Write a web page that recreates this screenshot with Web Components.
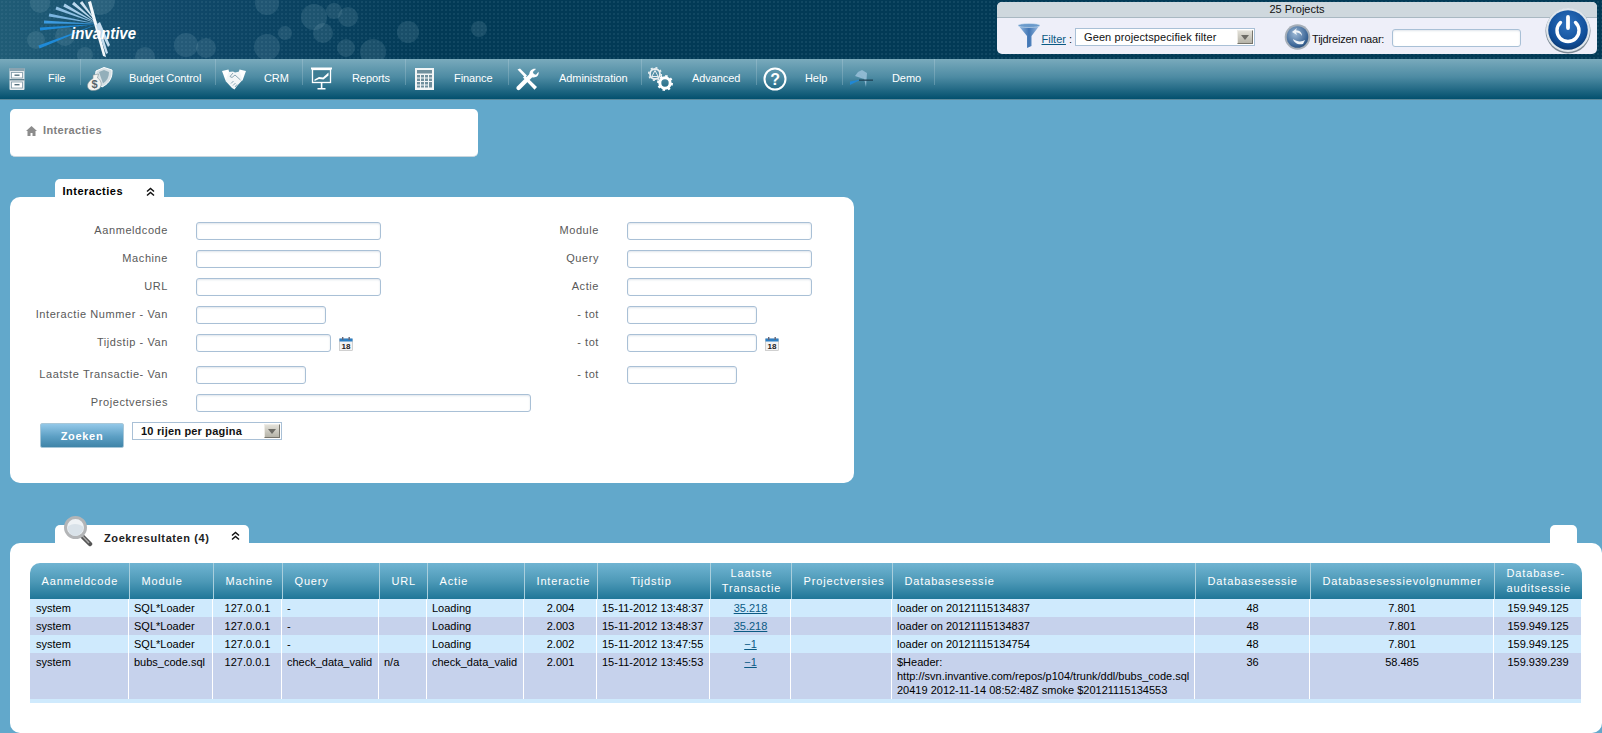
<!DOCTYPE html>
<html lang="nl">
<head>
<meta charset="utf-8">
<title>Interacties</title>
<style>
  html, body { margin: 0; padding: 0; height: 733px; overflow: hidden; }
  body { background: #62a8cb; font: 11px "Liberation Sans", Arial, sans-serif; color: #000; }
</style>
</head>
<body>
<inv-header></inv-header>
<inv-nav>
  <inv-nav-item icon="file" w="81" box="48" pad="8">File</inv-nav-item>
  <inv-nav-item icon="budget" w="135" box="48">Budget Control</inv-nav-item>
  <inv-nav-item icon="crm" w="87" box="48">CRM</inv-nav-item>
  <inv-nav-item icon="reports" w="103" box="49" pad="8">Reports</inv-nav-item>
  <inv-nav-item icon="finance" w="103" box="48" pad="8">Finance</inv-nav-item>
  <inv-nav-item icon="admin" w="133" pad="6">Administration</inv-nav-item>
  <inv-nav-item icon="advanced" w="115">Advanced</inv-nav-item>
  <inv-nav-item icon="help" w="86" box="48" pad="6">Help</inv-nav-item>
  <inv-nav-item icon="demo" w="92" box="49">Demo</inv-nav-item>
</inv-nav>
<inv-main>
  <inv-breadcrumb>Interacties</inv-breadcrumb>
  <inv-panel title="Interacties" width="844" height="286" tab="109" toggle="91" gap="22">
    <inv-search-form></inv-search-form>
  </inv-panel>
  <inv-panel title="Zoekresultaten (4)" width="1592" height="190" tab="194" toggle="176" gap="42" search>
    <inv-results></inv-results>
  </inv-panel>
</inv-main>

<script>
// icons drawn for this page
const ICONS = {
  file: `<svg width="24" height="24" viewBox="0 0 24 24"><rect x="1.500" y="1" width="15" height="22" rx="1" fill="#e4e9ec"/><rect x="1.500" y="1" width="15" height="3" fill="#8aa3b0"/><rect x="1.500" y="12" width="15" height="1.400" fill="#5f7f8e"/><rect x="3.500" y="5.500" width="11" height="5.500" fill="#fff" stroke="#7d98a6" stroke-width=".8"/><rect x="3.500" y="15" width="11" height="6" fill="#fff" stroke="#7d98a6" stroke-width=".8"/><rect x="6.500" y="7.500" width="5" height="1.400" fill="#55707e"/><rect x="6.500" y="17" width="5" height="1.400" fill="#55707e"/></svg>`,
  budget: `<svg width="26" height="24" viewBox="0 0 26 24"><path d="M9 4 L17 0.500 L25 3 C25.500 10 23 16 15 20 L8 14Z" fill="#d7e1e5" stroke="#fff"/><path d="M12 5 L17 3 L22 5 C22 10 20 14 16 16.500Z" fill="#93afba"/><path d="M6 8 L11.500 7 L10.500 11 C14 13 15 17 13.500 20 C12 24 3 25 1 21 C-1 17 3 13 6 11.500Z" fill="#f2f3f0" stroke="#7c8e96" stroke-width=".6"/><text x="4.500" y="21" font-family="Liberation Sans, sans-serif" font-size="11" font-weight="700" fill="#56646a">$</text></svg>`,
  crm: `<svg width="24" height="24" viewBox="0 0 24 24"><path d="M0 4 L6.500 2.500 L8.500 10 L3.500 13.500Z" fill="#fff"/><path d="M24 4 L17.500 2.500 L15.500 10 L20.500 13.500Z" fill="#fff"/><path d="M6.500 5 L11 4.500 L13 5.500 L17.500 4.500 L20.500 13 L15 19 L12.500 22.500 L10 21 L3.500 14Z" fill="#f2f6f7"/><path d="M11 6 L8 9.500 L10 10.500 L13 8 L18.500 13 M9 16.500 L11.500 14 M11 18.500 L13.500 16 M13 20 L15 17.500" fill="none" stroke="#7d9cab" stroke-width=".9"/></svg>`,
  reports: `<svg width="22" height="24" viewBox="0 0 22 24"><rect x="0" y="0.500" width="21" height="2" fill="#fff"/><rect x="1.500" y="2.500" width="18" height="13" fill="#3f7d94" stroke="#fff" stroke-width="1.300"/><path d="M3.500 12.500 L8 10 L12 10.500 L17.500 5.500 L17.500 8.500 L12.500 12.500 L8 12 L3.500 14Z" fill="#fff"/><rect x="9.800" y="15.500" width="1.600" height="6" fill="#fff"/><rect x="6.500" y="21" width="8" height="1.500" fill="#fff"/></svg>`,
  finance: `<svg width="22" height="24" viewBox="0 0 22 24"><rect x="1" y="1" width="19" height="22" fill="#f2f5f6"/><rect x="3" y="3" width="15" height="3.500" fill="#6f8f9d"/><g fill="#6f8f9d"><rect x="3" y="8" width="3" height="2.500"/><rect x="7" y="8" width="3" height="2.500"/><rect x="11" y="8" width="3" height="2.500"/><rect x="15" y="8" width="3" height="2.500"/><rect x="3" y="11.500" width="3" height="2.500"/><rect x="7" y="11.500" width="3" height="2.500"/><rect x="11" y="11.500" width="3" height="2.500"/><rect x="15" y="11.500" width="3" height="2.500"/><rect x="3" y="15" width="3" height="2.500"/><rect x="7" y="15" width="3" height="2.500"/><rect x="11" y="15" width="3" height="2.500"/><rect x="15" y="15" width="3" height="5.500"/><rect x="3" y="18.500" width="3" height="2"/><rect x="7" y="18.500" width="3" height="2"/><rect x="11" y="18.500" width="3" height="2"/></g></svg>`,
  admin: `<svg width="24" height="24" viewBox="0 0 24 24"><path d="M2.500 2.500 L5 1.500 L12 8.500 L10 10.500Z" fill="#fff"/><path d="M10 8.500 L22 20 L19.500 22.800 L8 10.500Z" fill="#fff"/><path d="M3.500 21 L16 8.500" stroke="#fff" stroke-width="4.200" stroke-linecap="round"/><path d="M15 9.500 C13 5.500 16.500 1 21 2 L17.800 5 L18.800 7 L21 7.800 L23.500 4.800 C24.500 9 20 12 15 9.500Z" fill="#fff"/></svg>`,
  advanced: `<svg width="25" height="24" viewBox="0 0 25 24"><g fill="none" stroke="#e9eff1"><circle cx="7" cy="7" r="5" stroke-width="1.800"/><circle cx="7" cy="7" r="6.300" stroke-width="1.600" stroke-dasharray="2 2.900"/><path d="M7 3.500 L3.800 9.500 H10.200Z" stroke-width="1"/></g><circle cx="17" cy="16" r="5.200" fill="none" stroke="#fff" stroke-width="3"/><circle cx="17" cy="16" r="7" fill="none" stroke="#fff" stroke-width="2" stroke-dasharray="2.400 3.100"/></svg>`,
  help: `<svg width="24" height="24" viewBox="0 0 24 24"><circle cx="12" cy="12" r="10.500" fill="none" stroke="#fff" stroke-width="2"/><text x="12" y="17.500" text-anchor="middle" font-family="Liberation Sans, sans-serif" font-size="16" font-weight="700" fill="#fff">?</text></svg>`,
  demo: `<svg width="24" height="24" viewBox="0 0 24 24"><path d="M6 9 L15 12 L9 5Z M9 5 L16 13 L13 3Z M13 3 L17 20 L18 6Z" fill="#8fb9d2"/><path d="M1 18 L12 12.500 L1 14.500Z" fill="#1f87d6"/><rect x="10" y="12.500" width="14" height="1.300" fill="#1d4256"/></svg>`,
  funnel: `<svg width="24" height="26" viewBox="0 0 24 26"><defs><linearGradient id="fg" x1="0" x2="1"><stop offset="0" stop-color="#9cc0e4"/><stop offset=".5" stop-color="#3f74b4"/><stop offset="1" stop-color="#a8c6e6"/></linearGradient></defs><path d="M1 2 L23 2 L14.500 13 L14.500 23 L10 25 L10 13Z" fill="url(#fg)"/><ellipse cx="12" cy="2.500" rx="11" ry="2" fill="#6a9acb" stroke="#d3e2f1" stroke-width=".6"/></svg>`,
  globe: `<svg width="27" height="28" viewBox="0 0 27 28"><defs><radialGradient id="gg" cx=".4" cy=".35" r=".8"><stop offset="0" stop-color="#9db9d6"/><stop offset=".7" stop-color="#3b6596"/><stop offset="1" stop-color="#1f3f68"/></radialGradient></defs><circle cx="13.500" cy="14" r="12.800" fill="#a5aeb8"/><circle cx="13.500" cy="14" r="10.800" fill="url(#gg)"/><path d="M13 5 L8 9 L13 12 L12 9.500 C15 9.500 17 11 18 13 C18 10 16 7.500 12 7.300Z M9 16 C10 20 14 22 19 21 L21 17 C18 19 13 19 9 16Z" fill="#eef3f8"/></svg>`,
  power: `<svg width="46" height="47" viewBox="0 0 46 47"><defs><radialGradient id="pg" cx=".5" cy=".35" r=".7"><stop offset="0" stop-color="#2f73c0"/><stop offset=".7" stop-color="#114f9a"/><stop offset="1" stop-color="#0a3468"/></radialGradient></defs><circle cx="23" cy="24" r="22.500" fill="#7d8a95"/><circle cx="23" cy="23" r="22" fill="#dfe6ec"/><circle cx="23" cy="23" r="19.800" fill="url(#pg)"/><path d="M15.500 15.500 A11 11 0 1 0 30.500 15.500" fill="none" stroke="#fff" stroke-width="3.400" stroke-linecap="round"/><path d="M23 10 V21" stroke="#fff" stroke-width="3.800" stroke-linecap="round"/></svg>`,
  search: `<svg width="30" height="32" viewBox="0 0 30 32"><path d="M18 20 L27 29" stroke="#555" stroke-width="4.500" stroke-linecap="round"/><path d="M18.500 20 L26 28" stroke="#a9a9a9" stroke-width="1.500"/><circle cx="12.500" cy="12.500" r="10" fill="#eef2f5" stroke="#b3b5b7" stroke-width="3"/><path d="M4.500 12 C8 8 16 8 20.500 12 C20 18 15 21 12 21 C8 21 5 17 4.500 12Z" fill="#d9e2e9"/></svg>`,
  chevrons: `<svg width="9" height="10" viewBox="0 0 9 10"><path d="M1 4.500 L4.500 1.500 L8 4.500 M1 8.500 L4.500 5.500 L8 8.500" fill="none" stroke="#111" stroke-width="1.500"/></svg>`,
  home: `<svg width="11" height="10" viewBox="0 0 11 10"><path d="M5.500 0 L11 5 H9.500 V10 H6.500 V7 H4.500 V10 H1.500 V5 H0Z" fill="#8c8c8c"/></svg>`,
  calendar: `<svg width="14" height="14" viewBox="0 0 14 14"><rect x="0.500" y="2" width="13" height="11.500" fill="#f3f3f3" stroke="#b5b5b5" stroke-width=".6"/><rect x="0.500" y="1.500" width="13" height="3" fill="#2d7fc4"/><rect x="3" y="0" width="1.400" height="3" fill="#667"/><rect x="9.500" y="0" width="1.400" height="3" fill="#667"/><text x="7" y="11.800" text-anchor="middle" font-family="Liberation Sans, sans-serif" font-size="8" font-weight="700" fill="#222">18</text></svg>`,
};

class InvHeader extends HTMLElement {
  constructor() {
    super();
    this.attachShadow({ mode: 'open' });
    this.render();
  }

  // one ray of the logo: narrow where the rays meet, wider at the outer end
  ray(x, y, hub, width, colour) {
    const dx = x - hub[0];
    const dy = y - hub[1];
    const len = Math.hypot(dx, dy);
    const px = (-dy / len) * width;
    const py = (dx / len) * width;
    return `<polygon fill="${colour}" points="${hub[0]},${hub[1]} ${x + px},${y + py} ${x - px},${y - py}"/>`;
  }

  render() {
    const bubbles = [
      [314, 17, 13], [348, 17, 10], [334, 11, 8], [323, 33, 10], [408, 32, 11], [346, 48, 9],
      [373, 52, 13], [479, 29, 8], [285, 33, 7], [267, 47, 13], [186, 45, 12], [206, 48, 10],
      [40, 3, 10], [100, 0, 15], [267, 3, 12], [145, 57, 10], [85, 55, 8], [36, 40, 9], [65, 36, 10],
    ]
      .map(([x, y, r]) => `<circle cx="${x}" cy="${y}" r="${r}"/>`)
      .join('');
    const hub = [98, 24];
    const rays = [
      [39, 47, '#1f8ad8'], [40, 29, '#1f8ad8'], [44, 22, '#3d9be0'], [49, 15, '#79b4e0'],
      [56, 8, '#8fc0e4'], [64, 5, '#a6cdea'], [73, 3, '#bcd9ee'], [81, 2, '#d0e4f2'],
    ]
      .map(([x, y, c]) => this.ray(x, y, hub, 1.6, c))
      .join('');
    this.shadowRoot.innerHTML = `
      <style>
        :host {
          display: flex;
          justify-content: flex-end;
          position: relative;
          height: 59px;
          box-sizing: border-box;
          padding: 2px 5px 0 0;
          background-color: #023a56;
          background-image:
            radial-gradient(circle at 2px 2px, rgba(90, 140, 165, 0.16) 1px, transparent 1.4px),
            linear-gradient(90deg, #205c76 0, #11496a 170px, #023a56 440px);
          background-size: 4px 4px, 100% 100%;
        }
        .deco { position: absolute; left: 0; top: 0; }
        .deco circle { fill: rgba(190, 220, 230, 0.12); }
        .logo { position: absolute; left: 0; top: 0; }
        .box {
          position: relative;
          width: 600px;
          height: 52px;
          background: #eeeff9;
          border-radius: 5px;
          color: #111;
        }
        .title {
          height: 15px;
          line-height: 15px;
          text-align: center;
          background: #cfd8de;
          border-bottom: 1px solid #a9b8c2;
          border-radius: 5px 5px 0 0;
        }
        .row { display: flex; align-items: flex-start; height: 36px; }
        .funnel { margin: 5px 0 0 20px; height: 26px; }
        a { color: #0b5a84; margin-top: 15px; margin-left: 0.5px; }
        .colon { margin: 15px 3px 0 3px; }
        inv-select { margin-top: 10px; }
        .globe { margin: 5px 1px 0 29px; height: 28px; }
        .travel { margin: 15px 8px 0 0; white-space: nowrap; letter-spacing: -0.2px; }
        inv-input { margin-top: 11px; }
        .power { position: absolute; right: 6px; top: 5px; height: 47px; }
      </style>
      <svg class="deco" width="560" height="59">${bubbles}</svg>
      <svg class="logo" width="150" height="59" viewBox="0 0 150 59">
        ${rays}
        <polygon fill="#f4f8fb" points="88,2 91,1 106,57 103,56"/>
        <polygon fill="#c4dcee" points="97,24 100,22 110,45 108,47"/>
        <polygon fill="#c4dcee" points="96,25 99,24 108,53 106,54"/>
        <text x="71" y="39" font-family="Liberation Sans, sans-serif" font-size="17" font-weight="700" font-style="italic" fill="#fff" textLength="65" lengthAdjust="spacingAndGlyphs">invantive</text>
      </svg>
      <div class="box">
        <div class="title">25 Projects</div>
        <div class="row">
          <span class="funnel">${ICONS.funnel}</span>
          <a href="#">Filter </a><span class="colon">:</span>
          <inv-select width="180" value="Geen projectspecifiek filter"></inv-select>
          <span class="globe">${ICONS.globe}</span>
          <span class="travel">Tijdreizen naar:</span>
          <inv-input width="129"></inv-input>
        </div>
        <span class="power">${ICONS.power}</span>
      </div>
    `;
  }
}

class InvNav extends HTMLElement {
  constructor() {
    super();
    this.attachShadow({ mode: 'open' });
    this.shadowRoot.innerHTML = `
      <style>
        :host {
          display: flex;
          height: 40px;
          background: linear-gradient(#79aabc, #4d8ba3 45%, #03506e);
          border-bottom: 1px solid #5d8a9c;
          color: #fff;
        }
      </style>
      <slot></slot>
    `;
  }
}

class InvNavItem extends HTMLElement {
  constructor() {
    super();
    this.attachShadow({ mode: 'open' });
  }

  connectedCallback() {
    const box = this.getAttribute('box') || 50;
    const pad = this.getAttribute('pad') || 6;
    this.shadowRoot.innerHTML = `
      <style>
        :host {
          display: flex;
          align-items: center;
          box-sizing: border-box;
          width: ${this.getAttribute('w')}px;
          background: linear-gradient(#8fb8c8, #5b93a8) right top / 1px 26px no-repeat;
          white-space: nowrap;
          letter-spacing: -0.08px;
        }
        .icon {
          display: flex;
          box-sizing: border-box;
          width: ${box}px;
          padding-left: ${pad}px;
        }
        span { margin-top: -3px; }
      </style>
      <div class="icon">${ICONS[this.getAttribute('icon')]}</div>
      <span><slot></slot></span>
    `;
  }
}

class InvMain extends HTMLElement {
  constructor() {
    super();
    this.attachShadow({ mode: 'open' });
    this.shadowRoot.innerHTML = `
      <style>
        :host { display: block; padding: 9px 0 0 10px; }
      </style>
      <slot></slot>
    `;
  }
}

class InvBreadcrumb extends HTMLElement {
  constructor() {
    super();
    this.attachShadow({ mode: 'open' });
    this.shadowRoot.innerHTML = `
      <style>
        :host {
          display: flex;
          align-items: flex-start;
          gap: 6px;
          box-sizing: border-box;
          width: 468px;
          height: 48px;
          padding: 18px 0 0 16px;
          background: #fff;
          border-bottom: 1px solid #c9d6de;
          border-radius: 5px;
          color: #808080;
          font-weight: 700;
          letter-spacing: 0.35px;
        }
        svg { margin-top: -1px; }
        span { margin-top: -4px; line-height: 14px; }
      </style>
      ${ICONS.home}<span><slot></slot></span>
    `;
  }
}

class InvPanel extends HTMLElement {
  constructor() {
    super();
    this.attachShadow({ mode: 'open' });
  }

  connectedCallback() {
    const a = (n) => this.getAttribute(n);
    const search = this.hasAttribute('search');
    this.shadowRoot.innerHTML = `
      <style>
        :host { display: block; width: ${a('width')}px; margin-top: ${a('gap')}px; }
        .tabs { display: flex; justify-content: space-between; height: 18px; padding: 0 25px 0 45px; }
        .tab {
          position: relative;
          box-sizing: border-box;
          width: ${a('tab')}px;
          background: #fff;
          border-radius: 5px 5px 0 0;
          padding: ${search ? 7 : 6}px 0 0 ${search ? 49 : 7.5}px;
          font-weight: 700;
          letter-spacing: ${search ? 0.6 : 0.5}px;
          line-height: 13px;
          color: ${search ? '#222' : '#000'};
        }
        .lens { position: absolute; left: 8px; top: -10px; }
        .toggle { position: absolute; left: ${a('toggle')}px; top: ${search ? 6 : 8}px; display: flex; }
        .stub { width: 27px; background: #fff; border-radius: 5px 5px 0 0; }
        .card {
          box-sizing: border-box;
          height: ${a('height')}px;
          background: #fff;
          border-radius: 10px;
        }
      </style>
      <div class="tabs">
        <div class="tab">
          ${search ? `<span class="lens">${ICONS.search}</span>` : ''}
          ${a('title')}
          <span class="toggle">${ICONS.chevrons}</span>
        </div>
        ${search ? '<div class="stub"></div>' : ''}
      </div>
      <div class="card"><slot></slot></div>
    `;
  }
}

class InvInput extends HTMLElement {
  constructor() {
    super();
    this.attachShadow({ mode: 'open' });
  }

  connectedCallback() {
    this.shadowRoot.innerHTML = `
      <style>
        :host { display: block; }
        input {
          display: block;
          box-sizing: border-box;
          width: ${this.getAttribute('width')}px;
          height: 18px;
          margin: 0;
          padding: 0 3px;
          background: #fff;
          border: 1px solid #a9c0d6;
          border-radius: 3px;
          box-shadow: inset 0 1px 2px rgba(130, 150, 180, 0.25);
        }
      </style>
      <input type="text">
    `;
  }
}

class InvSelect extends HTMLElement {
  constructor() {
    super();
    this.attachShadow({ mode: 'open' });
  }

  connectedCallback() {
    const bold = this.hasAttribute('bold');
    this.shadowRoot.innerHTML = `
      <style>
        :host { display: block; }
        .sel {
          display: flex;
          align-items: center;
          justify-content: space-between;
          box-sizing: border-box;
          width: ${this.getAttribute('width')}px;
          height: 18px;
          padding: 0 1px 0 8px;
          background: #fff;
          border: 1px solid #a9c0d6;
          color: #111;
          font-weight: ${bold ? 700 : 400};
          letter-spacing: ${bold ? '0.2px' : '0.1px'};
          white-space: nowrap;
        }
        .arrow {
          display: flex;
          align-items: center;
          justify-content: center;
          box-sizing: border-box;
          width: 16px;
          height: 14px;
          background: linear-gradient(#e2e0d8, #b5b3a8);
          border: 1px solid;
          border-color: #eeece6 #77756c #77756c #eeece6;
        }
        .arrow i {
          width: 0;
          height: 0;
          border: 4px solid transparent;
          border-top: 5px solid #6d6c66;
          border-bottom: 0;
        }
      </style>
      <div class="sel"><span>${this.getAttribute('value')}</span><span class="arrow"><i></i></span></div>
    `;
  }
}

class InvField extends HTMLElement {
  constructor() {
    super();
    this.attachShadow({ mode: 'open' });
  }

  connectedCallback() {
    const cal = this.hasAttribute('calendar');
    this.shadowRoot.innerHTML = `
      <style>
        :host { display: flex; align-items: flex-start; }
        label {
          box-sizing: border-box;
          width: ${this.getAttribute('label-width')}px;
          padding-right: 28px;
          line-height: 16px;
          text-align: right;
          color: #595959;
          letter-spacing: 0.58px;
          white-space: nowrap;
        }
        svg { margin: 3px 0 0 8px; }
      </style>
      <label>${this.getAttribute('label')}</label>
      <inv-input width="${this.getAttribute('width')}"></inv-input>
      ${cal ? ICONS.calendar : ''}
    `;
  }
}

class InvSearchForm extends HTMLElement {
  constructor() {
    super();
    this.attachShadow({ mode: 'open' });
    this.render();
  }

  field(label, width, labelWidth, calendar) {
    return `<inv-field label="${label}" width="${width}" label-width="${labelWidth}" ${calendar ? 'calendar' : ''}></inv-field>`;
  }

  render() {
    const rows = [
      ['Aanmeldcode', 185, '', 'Module', 185, ''],
      ['Machine', 185, '', 'Query', 185, ''],
      ['URL', 185, '', 'Actie', 185, ''],
      ['Interactie Nummer - Van', 130, '', '- tot', 130, ''],
      ['Tijdstip - Van', 135, 'c', '- tot', 130, 'c'],
      ['Laatste Transactie- Van', 110, '', '- tot', 110, ''],
    ];
    this.shadowRoot.innerHTML = `
      <style>
        :host { display: block; padding-top: 25px; }
        .grid {
          display: grid;
          grid-template-columns: 521px 1fr;
          grid-template-rows: 28px 28px 28px 28px 32px 28px 28px;
        }
        .actions { display: flex; align-items: flex-start; gap: 8px; padding-left: 30px; }
        button {
          box-sizing: border-box;
          width: 84px;
          height: 25px;
          margin-top: 1px;
          padding: 0;
          background: linear-gradient(#93c8e8, #5c9fc4 55%, #3f84a8);
          border: 1px solid #a8c7d8;
          border-radius: 2px;
          color: #fff;
          font: 700 11px "Liberation Sans", Arial, sans-serif;
          letter-spacing: 0.7px;
        }
      </style>
      <div class="grid">
        ${rows
          .map(
            (r) =>
              this.field(r[0], r[1], 186, r[2]) + this.field(r[3], r[4], 96, r[5])
          )
          .join('')}
        ${this.field('Projectversies', 335, 186)}<div></div>
      </div>
      <div class="actions">
        <button type="button">Zoeken</button>
        <inv-select width="150" bold value="10 rijen per pagina"></inv-select>
      </div>
    `;
  }
}

class InvResults extends HTMLElement {
  constructor() {
    super();
    this.attachShadow({ mode: 'open' });
    this.render();
  }

  render() {
    const head = [
      ['Aanmeldcode'], ['Module'], ['Machine'], ['Query'], ['URL'], ['Actie'], ['Interactie'],
      ['Tijdstip', 'c'], ['Laatste Transactie', 'c'], ['Projectversies'], ['Databasesessie'],
      ['Databasesessie'], ['Databasesessievolgnummer'], ['Database-auditsessie'],
    ];
    const aligns = ['', '', 'c', '', '', '', 'c', '', 'c', '', '', 'c', 'c', 'c'];
    const link = (t) => `<a href="#">${t}</a>`;
    const rows = [
      ['system', 'SQL*Loader', '127.0.0.1', '-', '', 'Loading', '2.004', '15-11-2012 13:48:37', link('35.218'), '', 'loader on 20121115134837', '48', '7.801', '159.949.125'],
      ['system', 'SQL*Loader', '127.0.0.1', '-', '', 'Loading', '2.003', '15-11-2012 13:48:37', link('35.218'), '', 'loader on 20121115134837', '48', '7.801', '159.949.125'],
      ['system', 'SQL*Loader', '127.0.0.1', '-', '', 'Loading', '2.002', '15-11-2012 13:47:55', link('&minus;1'), '', 'loader on 20121115134754', '48', '7.801', '159.949.125'],
      ['system', 'bubs_code.sql', '127.0.0.1', 'check_data_valid', 'n/a', 'check_data_valid', '2.001', '15-11-2012 13:45:53', link('&minus;1'), '', '$Header: http://svn.invantive.com/repos/p104/trunk/ddl/bubs_code.sql 20419 2012-11-14 08:52:48Z smoke $20121115134553', '36', '58.485', '159.939.239'],
    ];
    this.shadowRoot.innerHTML = `
      <style>
        :host { display: block; padding: 20px 0 0 20px; }
        .head, .row { display: grid; }
        .head {
          width: 1552px;
          height: 36px;
          grid-template-columns: 100px 84px 69px 97px 48px 97px 73px 113px 81px 101px 303px 115px 184px 87px;
          background: linear-gradient(#70b4d2, #4e9ab8 50%, #1f7698);
          border-radius: 10px 10px 0 0;
          color: #fff;
          letter-spacing: 0.85px;
          line-height: 15px;
        }
        .head div {
          display: flex;
          align-items: center;
          box-sizing: border-box;
          padding: 0 2px 0 11.5px;
          border-right: 1px solid #a9cfdd;
        }
        .head div:last-child { border-right: 0; }
        .head div.c { justify-content: center; text-align: center; padding: 0 6px 0 0; }
        .head div.c.w { padding: 0 0 0 1px; }
        .body { width: 1551px; background: #cfeafd; padding-bottom: 4px; }
        .row {
          grid-template-columns: 99px 84px 69px 97px 48px 97px 73px 113px 81px 101px 303px 115px 184px 87px;
          line-height: 14px;
        }
        .row:nth-child(odd) { background: #cfeafd; }
        .row:nth-child(even) { background: #c6d2ec; }
        .row div {
          box-sizing: border-box;
          padding: 2px 4px 2px 5px;
          border-right: 1px solid #fff;
        }
        .row div:last-child { border-right: 0; }
        .row div:first-child { padding-left: 6px; }
        .row div.c { text-align: center; }
        a { color: #0b5a84; }
      </style>
      <div class="head">
        ${head.map((h, i) => `<div class="${h[1] || ''} ${i === 8 ? 'w' : ''}">${h[0]}</div>`).join('')}
      </div>
      <div class="body">
        ${rows
          .map(
            (r) =>
              `<div class="row">${r
                .map((c, i) => `<div class="${aligns[i]}">${c}</div>`)
                .join('')}</div>`
          )
          .join('')}
      </div>
    `;
  }
}

customElements.define('inv-input', InvInput);
customElements.define('inv-select', InvSelect);
customElements.define('inv-field', InvField);
customElements.define('inv-header', InvHeader);
customElements.define('inv-nav', InvNav);
customElements.define('inv-nav-item', InvNavItem);
customElements.define('inv-main', InvMain);
customElements.define('inv-breadcrumb', InvBreadcrumb);
customElements.define('inv-panel', InvPanel);
customElements.define('inv-search-form', InvSearchForm);
customElements.define('inv-results', InvResults);
</script>
</body>
</html>
